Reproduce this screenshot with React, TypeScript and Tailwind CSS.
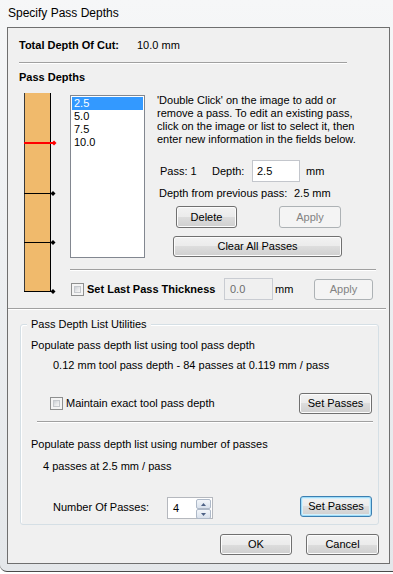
import React from "react";

const btnNormal =
  "flex items-center justify-center rounded-[3px] border border-[#707070] bg-[linear-gradient(to_bottom,#f2f2f2_0%,#ebebeb_50%,#dddddd_50%,#cfcfcf_100%)] shadow-[inset_0_0_0_1px_#fcfcfc] text-black";
const btnDisabled =
  "flex items-center justify-center rounded-[3px] border border-[#adb2b5] bg-[#f4f4f4] text-[#838383]";
const btnDefault =
  "flex items-center justify-center rounded-[3px] border border-[#3c7fb1] bg-[linear-gradient(to_bottom,#f2f2f2_0%,#ebebeb_50%,#dddddd_50%,#cfcfcf_100%)] shadow-[inset_0_0_0_1px_#9fdcf8,inset_0_0_0_2px_#d6f0fb] text-black";

function CheckBox() {
  return (
    <div className="w-[13px] h-[13px] border border-[#8e8f8f] bg-[#f4f4f4] p-[2px] shrink-0">
      <div className="w-full h-full border border-[#c5c8cc] bg-[linear-gradient(135deg,#cbcfd5_0%,#e9eaeb_60%,#f6f6f6_100%)]" />
    </div>
  );
}

function Etched({ className }: { className: string }) {
  return <div className={"h-[2px] border-t border-t-[#a0a0a0] border-b border-b-white " + className} />;
}

function DepthBar() {
  const marks = [
    { y: 51, red: true },
    { y: 101, red: false },
    { y: 150, red: false },
    { y: 199, red: false },
  ];
  return (
    <svg width="36" height="202" viewBox="0 0 36 202" className="shrink-0">
      <rect x="2" y="1" width="27" height="199" fill="#f0ba6c" />
      <line x1="2.5" y1="1" x2="2.5" y2="200" stroke="#3a3a3a" strokeWidth="1" />
      <line x1="28.5" y1="1" x2="28.5" y2="200" stroke="#000" strokeWidth="1" />
      {marks.map((m, i) =>
        m.red ? (
          <g key={i}>
            <line x1="2" y1={m.y} x2="32" y2={m.y} stroke="#ff0000" strokeWidth="2" />
            <polygon points={`32,${m.y - 2.5} 34.5,${m.y} 32,${m.y + 2.5} 29.5,${m.y}`} fill="#ff0000" />
          </g>
        ) : (
          <g key={i}>
            <line x1="2" y1={m.y + 0.5} x2="31" y2={m.y + 0.5} stroke="#000" strokeWidth="1" />
            <polygon points={`31,${m.y - 2} 33.5,${m.y + 0.5} 31,${m.y + 3} 28.5,${m.y + 0.5}`} fill="#000" />
          </g>
        )
      )}
    </svg>
  );
}

function Spinner() {
  return (
    <div className="mt-[1px] w-[46px] h-[22px] border border-[#b5b8be] bg-white flex items-center relative">
      <span className="pl-[5px]">4</span>
      <div className="absolute right-[1px] top-[1px] flex flex-col gap-[0px]">
        <div className="w-[15px] h-[10px] border border-[#aeb9c8] rounded-[2px] bg-[linear-gradient(to_bottom,#f3f6fa,#d9e1ec)] flex items-center justify-center">
          <svg width="5" height="3" viewBox="0 0 5 3"><polygon points="0,3 2.5,0 5,3" fill="#4d6185" /></svg>
        </div>
        <div className="w-[15px] h-[10px] border border-[#aeb9c8] rounded-[2px] bg-[linear-gradient(to_bottom,#f3f6fa,#d9e1ec)] flex items-center justify-center">
          <svg width="5" height="3" viewBox="0 0 5 3"><polygon points="0,0 2.5,3 5,0" fill="#4d6185" /></svg>
        </div>
      </div>
    </div>
  );
}

export default function App() {
  return (
    <div className="w-[393px] h-[574px] overflow-hidden bg-white text-[11px] leading-[13px] text-black font-['Liberation_Sans',Arial,sans-serif]">
      <div className="h-[572px] border-b border-b-[#4a4a4a] rounded-bl-[7px] bg-[linear-gradient(to_bottom,#f6f7f8_0%,#eef0f2_40%,#e4e7ea_100%)]">
        {/* title bar */}
        <div className="h-[27px] pl-[8px] flex items-center text-[12px]">Specify Pass Depths</div>

        {/* client area */}
        <div className="ml-[7px] w-[383px] h-[537px] border border-[#6f6f6f] bg-[#f0f0f0] overflow-hidden">
          <div className="mt-[11px] ml-[11px] h-[13px] flex">
            <span className="w-[118px] font-bold">Total Depth Of Cut:</span>
            <span>10.0 mm</span>
          </div>
          <Etched className="mt-[10px] ml-[11px] w-[328px]" />
          <div className="mt-[7px] ml-[11px] h-[13px] font-bold">Pass Depths</div>

          <div className="mt-[8px] flex items-start">
            <div className="ml-[14px]">
              <DepthBar />
            </div>
            <div className="ml-[12px] w-[316px]">
              <div className="flex items-start">
                <div className="mt-[3px] w-[75px] h-[163px] border border-[#828790] bg-white p-[1px] shrink-0">
                  <div className="h-[13px] pl-[2px] bg-[#3399ff] text-white">2.5</div>
                  <div className="h-[13px] pl-[2px]">5.0</div>
                  <div className="h-[13px] pl-[2px]">7.5</div>
                  <div className="h-[13px] pl-[2px]">10.0</div>
                </div>
                <div className="ml-[12px] mt-[2px] flex flex-col">
                  <div className="whitespace-nowrap">
                    'Double Click' on the image to add or
                    <br />
                    remove a pass. To edit an existing pass,
                    <br />
                    click on the image or list to select it, then
                    <br />
                    enter new information in the fields below.
                  </div>
                  <div className="mt-[14px] h-[22px] flex items-center">
                    <span className="w-[55px] pl-[3px]">Pass: 1</span>
                    <span className="w-[40px]">Depth:</span>
                    <div className="w-[48px] h-[22px] border border-[#c3c6cc] bg-white flex items-center pl-[4px]">2.5</div>
                    <span className="ml-[6px]">mm</span>
                  </div>
                  <div className="mt-[5px] h-[13px] flex">
                    <span className="w-[137px] pl-[2px]">Depth from previous pass:</span>
                    <span>2.5 mm</span>
                  </div>
                  <div className="mt-[6px] flex">
                    <div className={btnNormal + " ml-[19px] w-[61px] h-[22px]"}>Delete</div>
                    <div className={btnDisabled + " ml-[42px] w-[62px] h-[22px]"}>Apply</div>
                  </div>
                  <div className={btnNormal + " mt-[8px] ml-[16px] w-[169px] h-[21px]"}>Clear All Passes</div>
                </div>
              </div>
              <Etched className="mt-[11px] w-[306px]" />
              <div className="mt-[7px] h-[22px] flex items-center">
                <div className="ml-[1px]">
                  <CheckBox />
                </div>
                <span className="ml-[3px] w-[137px] font-bold">Set Last Pass Thickness</span>
                <div className="w-[49px] h-[22px] border border-[#c9ccd2] bg-[#f0f0f0] flex items-center pl-[5px] text-[#6d6d6d]">0.0</div>
                <span className="ml-[2px] w-[39px]">mm</span>
                <div className={btnDisabled + " w-[59px] h-[21px]"}>Apply</div>
              </div>
            </div>
          </div>

          <Etched className="mt-[8px] w-[378px]" />

          {/* group box */}
          <div className="relative mt-[14px] ml-[12px] w-[359px] h-[201px] border border-[#d5dfe5] rounded-[3px] shadow-[inset_1px_1px_0_#ffffff]">
            <span className="absolute left-[6px] -top-[7px] px-[4px] bg-[#f0f0f0]">Pass Depth List Utilities</span>
            <div className="mt-[14px] ml-[10px] h-[13px]">Populate pass depth list using tool pass depth</div>
            <div className="mt-[7px] ml-[32px] h-[13px]">0.12 mm tool pass depth - 84 passes at 0.119 mm / pass</div>
            <div className="mt-[21px] h-[21px] flex items-center">
              <div className="ml-[29px]">
                <CheckBox />
              </div>
              <span className="ml-[3px]">Maintain exact tool pass depth</span>
              <div className={btnNormal + " ml-auto mr-[6px] w-[73px] h-[21px]"}>Set Passes</div>
            </div>
            <Etched className="mt-[7px] ml-[16px] w-[336px]" />
            <div className="mt-[15px] ml-[10px] h-[13px]">Populate pass depth list using number of passes</div>
            <div className="mt-[9px] ml-[22px] h-[13px]">4 passes at 2.5 mm / pass</div>
            <div className="mt-[23px] flex items-start">
              <span className="mt-[5px] ml-[32px] w-[114px]">Number Of Passes:</span>
              <Spinner />
              <div className={btnDefault + " ml-auto mr-[6px] w-[72px] h-[21px]"}>Set Passes</div>
            </div>
          </div>

          <div className="mt-[9px] flex justify-end pr-[10px] gap-[14px]">
            <div className={btnNormal + " w-[72px] h-[21px]"}>OK</div>
            <div className={btnNormal + " w-[73px] h-[21px]"}>Cancel</div>
          </div>
        </div>
      </div>
    </div>
  );
}
